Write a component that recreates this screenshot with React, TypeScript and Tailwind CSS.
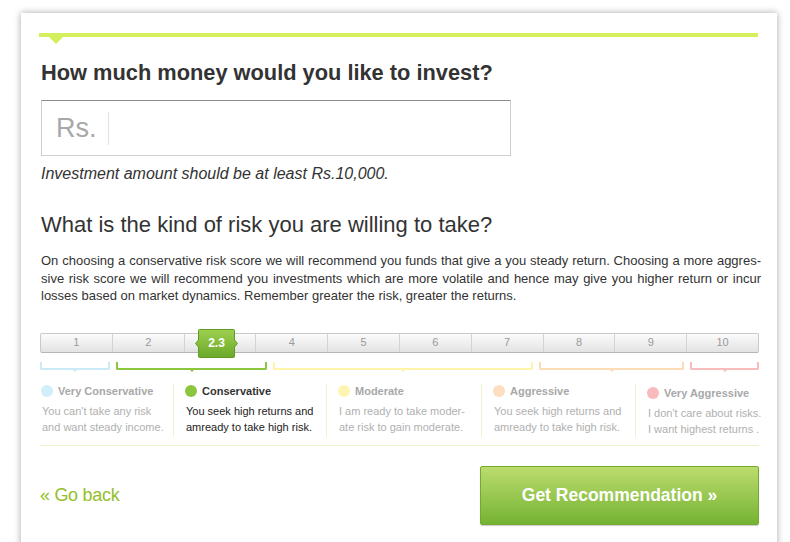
import React from "react";

const segments = ["1", "2", "", "4", "5", "6", "7", "8", "9", "10"];

const brackets = [
  { w: "w-[70px]", color: "border-[#cbeaf8]", notch: "border-t-[#cbeaf8]" },
  { w: "w-[151px]", color: "border-[#8cc63f]", notch: "border-t-[#8cc63f]" },
  { w: "w-[260px]", color: "border-[#fff4a8]", notch: "border-t-[#fff4a8]" },
  { w: "w-[145px]", color: "border-[#fcdcb6]", notch: "border-t-[#fcdcb6]" },
  { w: "w-[69px]", color: "border-[#f9bcbd]", notch: "border-t-[#f9bcbd]" },
];

const levels = [
  {
    w: "w-[133px]",
    pl: "pl-[1px]",
    dot: "bg-[#d3eefb]",
    title: "Very Conservative",
    lines: ["You can't take any risk", "and want steady income."],
    active: false,
  },
  {
    w: "w-[153px]",
    pl: "pl-[11px]",
    dot: "bg-[#8cc63f]",
    title: "Conservative",
    lines: ["You seek high returns and", "amready to take high risk."],
    active: true,
  },
  {
    w: "w-[155px]",
    pl: "pl-[11px]",
    dot: "bg-[#fff5b3]",
    title: "Moderate",
    lines: ["I am ready to take moder-", "ate risk to gain moderate."],
    active: false,
  },
  {
    w: "w-[154px]",
    pl: "pl-[11px]",
    dot: "bg-[#fddfbf]",
    title: "Aggressive",
    lines: ["You seek high returns and", "amready to take high risk."],
    active: false,
  },
  {
    w: "w-[124px]",
    pl: "pl-[11px]",
    dot: "bg-[#f9babd]",
    title: "Very Aggressive",
    lines: ["I don't care about risks.", "I want highest returns ."],
    active: false,
  },
];

const Thumb = () => (
  <div className="absolute left-[153px] top-[-5px] w-[45px] h-[29px]">
    <svg width="45" height="29" viewBox="0 0 45 29" className="absolute inset-0">
      <defs>
        <linearGradient id="thumbFill" x1="0" y1="0" x2="0" y2="1">
          <stop offset="0" stopColor="#9fd04f" />
          <stop offset="1" stopColor="#6aa82a" />
        </linearGradient>
      </defs>
      <path
        d="M4.5 1.5 Q4.5 0.5 5.5 0.5 H39.5 Q40.5 0.5 40.5 1.5 V11 L43.5 14.5 L40.5 18 V27.5 Q40.5 28.5 39.5 28.5 H5.5 Q4.5 28.5 4.5 27.5 V18 L1.5 14.5 L4.5 11 Z"
        fill="url(#thumbFill)"
        stroke="#5f9a22"
        strokeWidth="1"
      />
    </svg>
    <span className="absolute inset-0 flex items-center justify-center text-[12px] font-bold text-white">
      2.3
    </span>
  </div>
);

export default function App() {
  return (
    <div className="w-[790px] h-[542px] overflow-hidden bg-white pt-[13px] pl-[21px] font-['Liberation_Sans',Arial,sans-serif] text-[#333]">
      <div className="w-[756px] h-[600px] bg-white shadow-[0_0_7px_rgba(0,0,0,0.35)] pt-[20px] pl-[18px] pr-[18px]">
        {/* top accent */}
        <div className="relative h-[4px] w-[719px] bg-[#d4ef5e]">
          <div className="absolute left-[10px] top-[4px] w-0 h-0 border-l-[7px] border-r-[7px] border-t-[7px] border-l-transparent border-r-transparent border-t-[#d4ef5e]" />
        </div>

        <h1 className="mt-[24px] pl-[2px] text-[21.8px] leading-[24px] font-bold text-[#333]">
          How much money would you like to invest?
        </h1>

        <div className="mt-[15px] ml-[2px] flex items-center w-[470px] h-[56px] border border-[#cfcfcf] border-t-[#8c8c8c] bg-white">
          <span className="pl-[14px] pr-[11px] text-[27px] text-[#a8a8a8]">Rs.</span>
          <div className="w-px h-[33px] bg-[#e2e2e2]" />
        </div>

        <p className="mt-[8px] pl-[2px] text-[16px] leading-[20px] italic text-[#333]">
          Investment amount should be at least Rs.10,000.
        </p>

        <h2 className="mt-[29px] pl-[2px] text-[22px] leading-[24px] text-[#333]">
          What is the kind of risk you are willing to take?
        </h2>

        <p className="mt-[15px] pl-[2px] text-[13px] leading-[17.5px] text-[#333] w-[722px]">
          <span className="block whitespace-nowrap text-justify [text-align-last:justify]">
            On choosing a conservative risk score we will recommend you funds that give a you steady return. Choosing a more aggres-
          </span>
          <span className="block whitespace-nowrap text-justify [text-align-last:justify]">
            sive risk score we will recommend you investments which are more volatile and hence may give you higher return or incur
          </span>
          <span className="block">
            losses based on market dynamics. Remember greater the risk, greater the returns.
          </span>
        </p>

        {/* slider */}
        <div className="relative mt-[28px] ml-[1px] w-[719px] h-[20px] flex rounded-[2px] border border-[#c9c9c9] border-b-[#b5b5b5] bg-gradient-to-b from-[#fbfbfb] to-[#e3e3e3]">
          {segments.map((s, i) => (
            <div
              key={i}
              className={`flex-1 flex items-center justify-center text-[11px] text-[#9a9a9a] ${
                i < segments.length - 1 ? "border-r border-[#d3d3d3]" : ""
              }`}
            >
              {s}
            </div>
          ))}
          <Thumb />
        </div>

        {/* range brackets */}
        <div className="mt-[9px] ml-[1px] flex gap-x-[6px] w-[719px] justify-between">
          {brackets.map((b, i) => (
            <div
              key={i}
              className={`relative ${b.w} h-[8px] border-l-2 border-r-2 border-b-2 rounded-b-[2px] border-t-0 ${b.color}`}
            >
              <div
                className={`absolute left-1/2 -translate-x-1/2 top-[6px] w-0 h-0 border-l-[4px] border-r-[4px] border-t-[4px] border-l-transparent border-r-transparent ${b.notch}`}
              />
            </div>
          ))}
        </div>

        {/* levels */}
        <div className="mt-[14px] ml-[1px] flex w-[719px]">
          {levels.map((l, i) => (
            <div
              key={l.title}
              className={`${l.w} ${l.pl} ${i > 0 ? "border-l border-[#eef3cf]" : ""} h-[53px] text-[11px]`}
            >
              <div className={`flex items-center gap-[5px] ${i === 4 ? "mt-[2px]" : ""}`}>
                <span className={`inline-block w-[12px] h-[12px] rounded-full ${l.dot}`} />
                <span className={`font-bold leading-[14px] ${l.active ? "text-[#333]" : "text-[#a8a8a8]"}`}>
                  {l.title}
                </span>
              </div>
              <div className={`mt-[5px] leading-[16px] pl-[1px] ${l.active ? "text-[#222]" : "text-[#b0b0b0]"}`}>
                {l.lines.map((t) => (
                  <div key={t} className="whitespace-nowrap">
                    {t}
                  </div>
                ))}
              </div>
            </div>
          ))}
        </div>

        <div className="mt-[8px] ml-[1px] w-[719px] h-px bg-[#eef4cc]" />

        {/* actions */}
        <div className="mt-[20px] ml-[1px] w-[719px] flex items-center justify-between">
          <a className="text-[18px] text-[#94c02a] tracking-[-0.3px]">« Go back</a>
          <button className="w-[279px] h-[59px] rounded-[2px] border border-[#74a92f] bg-gradient-to-b from-[#bcdc6d] to-[#75b332] text-white text-[17.5px] font-bold shadow-[0_1px_1px_rgba(0,0,0,0.2)]">
            Get Recommendation »
          </button>
        </div>
      </div>
    </div>
  );
}
